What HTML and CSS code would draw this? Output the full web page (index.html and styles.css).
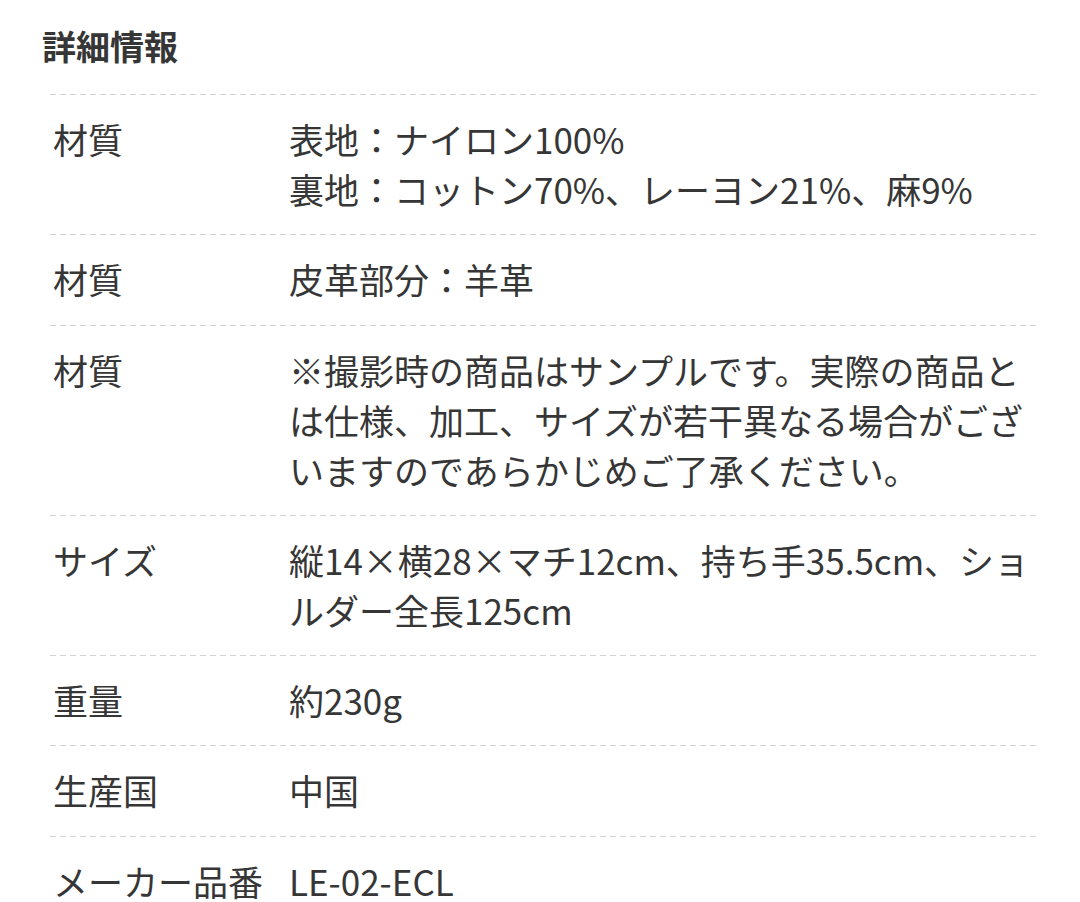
FILE: index.html
```html
<!DOCTYPE html>
<html lang="ja">
<head>
<meta charset="utf-8">
<link rel="stylesheet" href="styles.css">
</head>
<body>
<section class="details">
  <h2 class="details-title">詳細情報</h2>
  <dl class="spec-list">
    <div class="spec-row">
      <dt class="spec-label">材質</dt>
      <dd class="spec-value">表地：ナイロン100%<br>裏地：コットン70%、レーヨン21%、麻9%</dd>
    </div>
    <div class="spec-row">
      <dt class="spec-label">材質</dt>
      <dd class="spec-value">皮革部分：羊革</dd>
    </div>
    <div class="spec-row">
      <dt class="spec-label">材質</dt>
      <dd class="spec-value">※撮影時の商品はサンプルです。実際の商品とは仕様、加工、サイズが若干異なる場合がございますのであらかじめご了承ください。</dd>
    </div>
    <div class="spec-row">
      <dt class="spec-label">サイズ</dt>
      <dd class="spec-value">縦14×横28×マチ12cm、持ち手35.5cm、ショルダー全長125cm</dd>
    </div>
    <div class="spec-row">
      <dt class="spec-label">重量</dt>
      <dd class="spec-value">約230g</dd>
    </div>
    <div class="spec-row">
      <dt class="spec-label">生産国</dt>
      <dd class="spec-value">中国</dd>
    </div>
    <div class="spec-row">
      <dt class="spec-label">メーカー品番</dt>
      <dd class="spec-value">LE-02-ECL</dd>
    </div>
  </dl>
</section>
</body>
</html>
```
FILE: styles.css
```css
html, body {
  margin: 0;
  padding: 0;
  background: #fff;
}
body {
  font-family: "Noto Sans CJK JP", "Noto Sans", sans-serif;
  color: #363636;
  overflow: hidden;
}
.details {
  padding: 21px 42px 0 42px;
}
.details-title {
  margin: 0 0 23px 0;
  font-size: 34px;
  line-height: 50px;
  font-weight: 700;
}
.spec-list {
  margin: 0 0 0 8px;
  padding: 0;
}
.spec-row {
  display: flex;
  padding: 20px 0 20.3px;
  background-image: repeating-linear-gradient(to right, #d2d2d2 0 6px, transparent 6px 10px);
  background-size: 100% 1px;
  background-repeat: no-repeat;
  background-position: top left;
}
.spec-label {
  width: 236px;
  flex: none;
  padding-left: 3px;
  font-size: 35px;
  line-height: 50px;
  white-space: nowrap;
}
.spec-value {
  margin: 0;
  flex: 1;
  font-size: 35px;
  line-height: 50px;
}
```
